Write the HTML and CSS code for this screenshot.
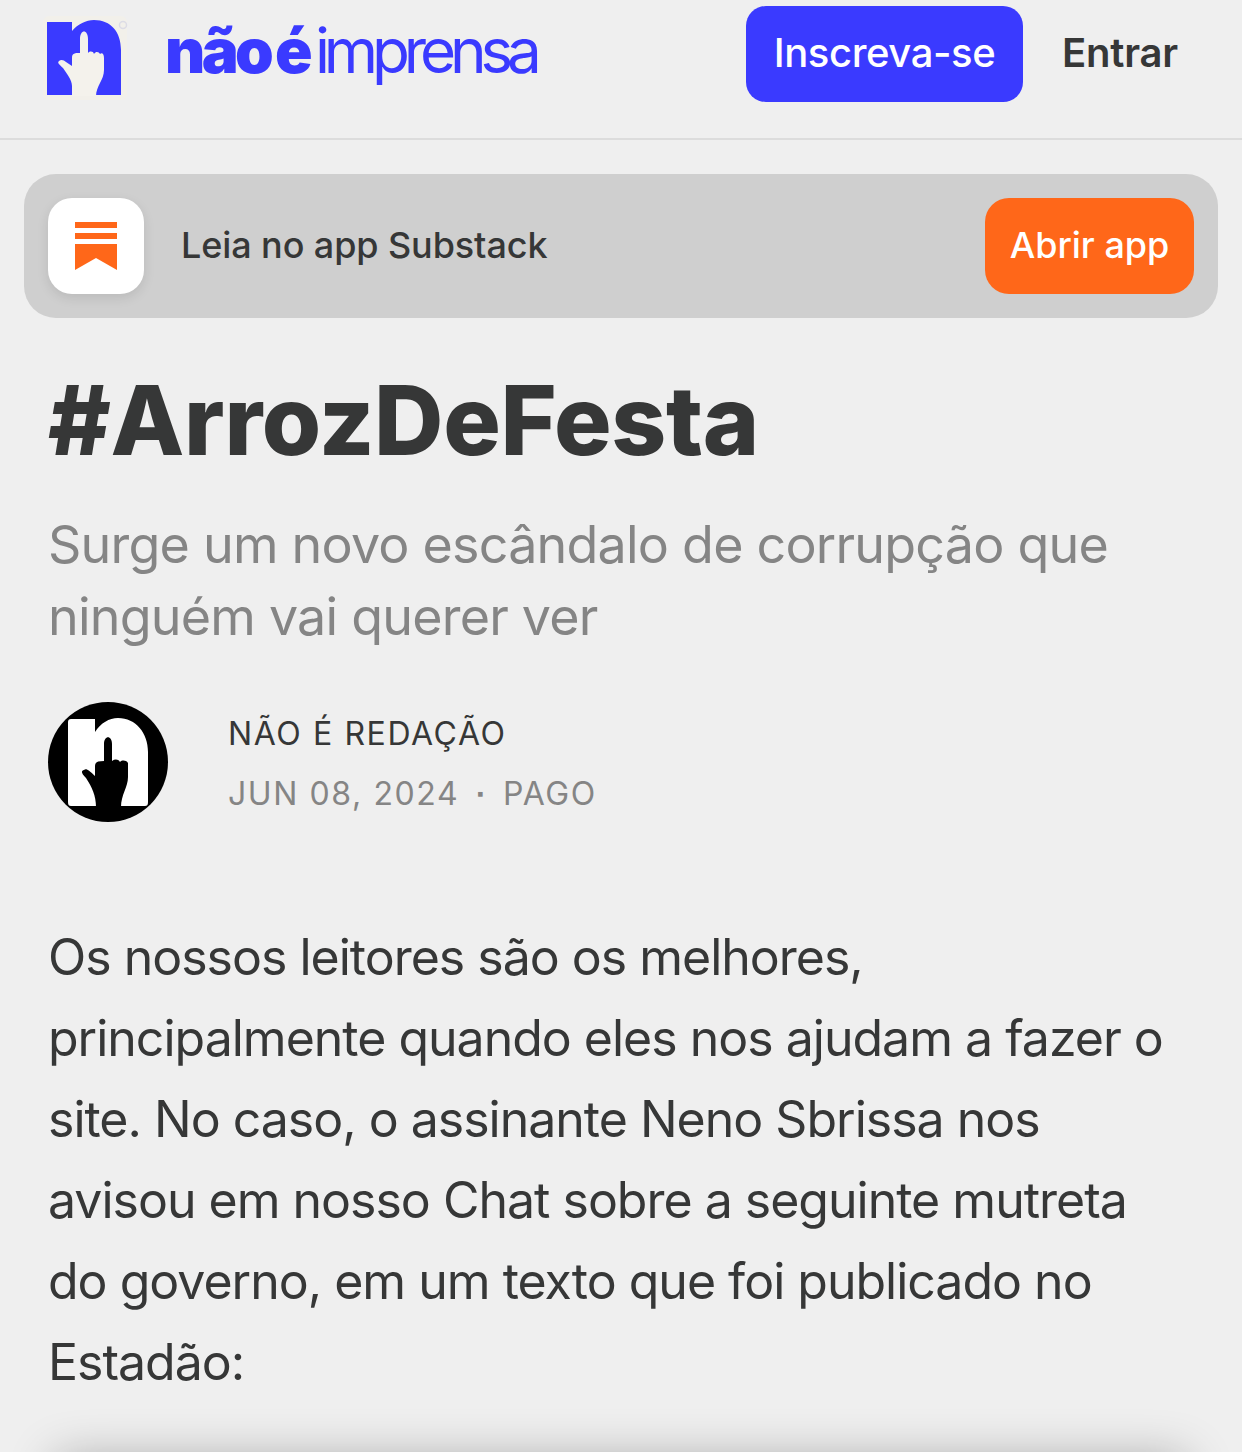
FILE: index.html
```html
<!DOCTYPE html>
<html lang="pt-BR">
  <head>
    <meta http-equiv="Content-Type" content="text/html;charset=UTF-8" />
    <meta name="viewport" content="width=device-width, initial-scale=1.0" />
    <title>#ArrozDeFesta</title>
    <link rel="stylesheet" href="styles.css">
  </head>
  <body>
    <header class="topbar">
      <div class="brand">
        <svg class="brand-icon" viewBox="-6 -6 90 90" aria-hidden="true">
          <rect x="-4" y="-4" width="84" height="84" rx="6" fill="#f2f0ea"/>
          <path fill="#3a3aff" d="M0 2H25V11C31 4 39 0 47 0C64 0 74 12 74 30V75H0Z"/>
          <path fill="#f4f2ec" d="M33 19C33 9 41 9 41 19V33C43 31 46 31 47 34C49 31 52 32 53 34C55 32 57 34 57 38V50C57 60 49 66 49 76H25V66C25 60 20 54 16 48C12 44 10 43 12 41C14 39 17 40 19 42L25 46V38C25 33 28 33 33 33Z"/>
          <circle cx="76" cy="5" r="3.5" fill="none" stroke="#dcdce6" stroke-width="1.5"/>
        </svg>
        <div class="wordmark"><span class="wordmark-bold">não é</span><span class="wordmark-thin">imprensa</span></div>
      </div>
      <div class="topbar-actions">
        <button type="button" class="btn-subscribe">Inscreva-se</button>
        <button type="button" class="btn-login">Entrar</button>
      </div>
    </header>

    <section class="app-banner">
      <div class="app-icon">
        <svg viewBox="0 0 42 48" class="app-icon-svg" aria-hidden="true">
          <path fill="#ff6719" d="M0 0H42V6H0ZM0 11H42V17H0ZM0 22H42V48L21 36L0 48Z"/>
        </svg>
      </div>
      <span class="app-text">Leia no app Substack</span>
      <button type="button" class="btn-open">Abrir app</button>
    </section>

    <main class="post">
      <h1 class="post-title">#ArrozDeFesta</h1>
      <h2 class="post-subtitle">Surge um novo escândalo de corrupção que ninguém vai querer ver</h2>

      <div class="byline">
        <svg class="avatar" viewBox="0 0 120 120" aria-hidden="true">
          <circle cx="60" cy="60" r="60" fill="#000"/>
          <path fill="#fff" d="M20 20C20 18 21 17 23 17H47V30C53 21 61 16 70 16C88 16 100 31 100 50V100C100 103 99 104 97 104H23C21 104 20 103 20 100Z"/>
          <path fill="#000" d="M56 42C56 33 64 33 64 42V59C67 57 70 57 72 60C74 58 78 58 80 61V75C80 85 73 93 73 105H48C48 94 44 85 38 76C33 71 33 69 36 68C38 66 41 68 47 74V64C47 60 50 59 56 59Z"/>
        </svg>
        <div class="byline-meta">
          <div class="byline-author">NÃO É REDAÇÃO</div>
          <div class="byline-date">JUN 08, 2024 <span class="dot">∙</span> PAGO</div>
        </div>
      </div>

      <p class="post-body">Os nossos leitores são os melhores, principalmente quando eles nos ajudam a fazer o site. No caso, o assinante Neno Sbrissa nos avisou em nosso Chat sobre a seguinte mutreta do governo, em um texto que foi publicado no Estadão:</p>

      <div class="quote-card"></div>
    </main>
  </body>
</html>
```

FILE: styles.css
```css
html {
  height: 100%;
  overflow: hidden;
}

body {
  margin: 0;
  height: 1452px;
  overflow: hidden;
  background-color: #efefef;
  color: #363737;
  font-family: Inter, "Liberation Sans", sans-serif;
}

button {
  border: none;
  font-family: inherit;
  cursor: pointer;
}

/* Topo */
.topbar {
  display: flex;
  justify-content: space-between;
  align-items: center;
  height: 140px;
  padding: 0 65px 30px 41px;
  box-sizing: border-box;
  border-bottom: 2px solid #dcdcdc;
}

.brand {
  display: flex;
  align-items: center;
  gap: 34px;
}

.brand-icon {
  width: 90px;
  height: 90px;
  margin-top: 10px;
}

.wordmark {
  display: flex;
  padding-bottom: 6px;
  color: #3a3aff;
  font-size: 62px;
  line-height: 70px;
}

.wordmark-bold {
  font-weight: 900;
  letter-spacing: -3.6px;
  word-spacing: -4px;
  margin-right: 6px;
}

.wordmark-thin {
  font-weight: 400;
  letter-spacing: -6.15px;
}

.topbar-actions {
  display: flex;
  align-items: center;
  gap: 39px;
}

.btn-subscribe {
  width: 277px;
  height: 96px;
  padding: 0 0 4px;
  border-radius: 20px;
  background-color: #3a3aff;
  color: #fff;
  font-size: 40px;
  font-weight: 500;
  letter-spacing: -0.4px;
}

.btn-login {
  width: 115px;
  padding: 0 0 4px;
  background: none;
  color: #363737;
  font-size: 40px;
  font-weight: 600;
  letter-spacing: -0.2px;
}

/* Banner do app */
.app-banner {
  display: flex;
  align-items: center;
  height: 144px;
  margin: 34px 24px 0;
  padding: 0 24px;
  box-sizing: border-box;
  border-radius: 32px;
  background-color: #cfcfcf;
}

.app-icon {
  display: flex;
  justify-content: center;
  align-items: center;
  width: 96px;
  height: 96px;
  border-radius: 24px;
  background-color: #fff;
  box-shadow: 0 4px 12px rgba(0, 0, 0, 0.1);
}

.app-icon-svg {
  width: 42px;
  height: 48px;
}

.app-text {
  flex: 1;
  margin-left: 37px;
  padding-bottom: 2px;
  font-size: 36px;
  font-weight: 500;
  letter-spacing: -0.1px;
}

.btn-open {
  width: 209px;
  height: 96px;
  padding: 0 0 2px;
  border-radius: 24px;
  background-color: #ff6719;
  color: #fff;
  font-size: 36px;
  font-weight: 500;
}

/* Post */
.post {
  padding: 0 48px;
}

.post-title {
  margin: 48px 0 0;
  font-size: 96px;
  line-height: 108px;
  font-weight: 800;
  letter-spacing: -0.35px;
}

.post-subtitle {
  margin: 35px 0 0;
  font-size: 52px;
  line-height: 72px;
  font-weight: 400;
  color: #858585;
  letter-spacing: -0.78px;
}

.byline {
  display: flex;
  align-items: center;
  margin-top: 47px;
}

.avatar {
  width: 120px;
  height: 120px;
}

.byline-meta {
  margin-left: 60px;
  padding-top: 4px;
}

.byline-author {
  font-size: 32px;
  line-height: 60px;
  letter-spacing: 1.6px;
}

.byline-date {
  font-size: 32px;
  line-height: 60px;
  letter-spacing: 1.6px;
  color: #858585;
}

.dot {
  margin: 0 6px;
  font-weight: 700;
}

.post-body {
  margin: 93px 0 0;
  font-size: 50px;
  line-height: 81px;
  letter-spacing: -1px;
}

.quote-card {
  height: 120px;
  margin: 56px 8px 0;
  box-shadow: 0 0 48px rgba(0, 0, 0, 0.3);
}
```
